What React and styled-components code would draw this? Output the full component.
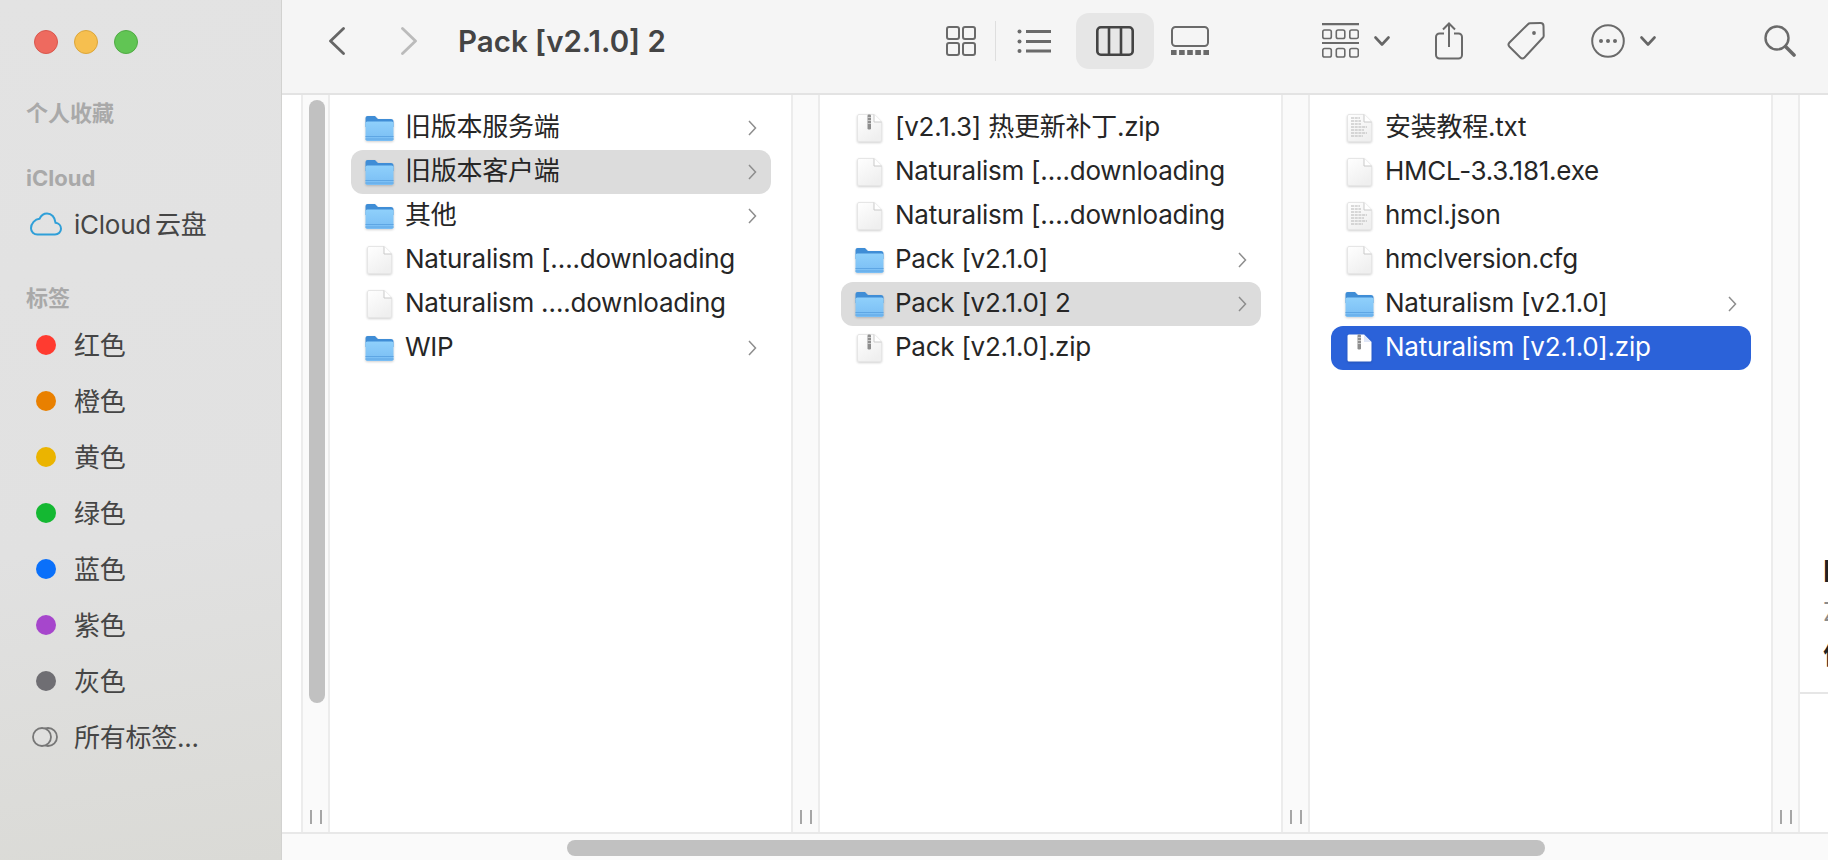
import React from 'react'
import styled, { createGlobalStyle } from 'styled-components'

const GlobalStyle = createGlobalStyle`
  html, body {
    margin: 0;
    height: 100%;
    overflow: hidden;
    background: #fff;
  }
  body {
    font-family: Inter, "Noto Sans CJK SC", sans-serif;
  }
  * {
    box-sizing: border-box;
  }
`

const Window = styled.div`
  display: flex;
  width: 1828px;
  height: 860px;
  overflow: hidden;
`

/* sidebar */
const Sidebar = styled.aside`
  flex: 0 0 282px;
  display: flex;
  flex-direction: column;
  padding-top: 30px;
  background: linear-gradient(172deg, #e3e3e3 0%, #e1e1e1 62%, #dadad6 100%);
  border-right: 1px solid #d2d2d0;
`

const Lights = styled.div`
  display: flex;
  gap: 16px;
  padding-left: 34px;
  margin-bottom: 40px;
`

const Light = styled.span`
  width: 24px;
  height: 24px;
  border-radius: 50%;
  background: ${p => p.$color};
  border: 1px solid ${p => p.$edge};
`

const Section = styled.section`
  margin-top: ${p => p.$top || 0}px;
`

const SectionTitle = styled.div`
  display: flex;
  align-items: center;
  height: 38px;
  padding-left: 26px;
  padding-bottom: ${p => (p.$cjk ? 4 : 0)}px;
  padding-top: ${p => (p.$cjk ? 0 : 1)}px;
  font-size: 22px;
  font-weight: 700;
  color: #a9a9a9;
`

const SideRow = styled.div`
  display: flex;
  align-items: center;
  height: 56px;
  padding-left: 30px;
  font-size: 26px;
  letter-spacing: -0.25px;
  word-spacing: -3px;
  color: #454545;
`

const SideIcon = styled.span`
  flex: 0 0 44px;
  display: flex;
  align-items: center;
`

const SideLabel = styled.span`
  padding-bottom: 4px;
`

const TagDot = styled.span`
  width: 20px;
  height: 20px;
  margin-left: 6px;
  border-radius: 50%;
  background: ${p => p.$color};
`

/* toolbar */
const Main = styled.main`
  flex: 1;
  min-width: 0;
  display: flex;
  flex-direction: column;
`

const Toolbar = styled.header`
  flex: 0 0 95px;
  display: flex;
  align-items: center;
  padding: 0 32px 12px 47px;
  background: #f5f5f5;
  border-bottom: 2px solid #e3e3e3;
`

const Title = styled.h1`
  margin: 0 0 0 41px;
  font-size: 29.5px;
  font-weight: 600;
  color: #444;
  white-space: nowrap;
`

const ToolSlot = styled.div`
  display: flex;
  align-items: center;
  margin-left: ${p => p.$ml || 0}px;
  svg {
    display: block;
  }
`

const Spacer = styled.div`
  flex: 1;
`

const ViewDivider = styled.span`
  width: 1px;
  height: 40px;
  margin-left: 19px;
  background: #dedede;
`

const ActiveView = styled.div`
  display: flex;
  align-items: center;
  justify-content: center;
  width: 78px;
  height: 56px;
  margin-left: 25px;
  border-radius: 13px;
  background: #e6e6e6;
`

/* browser columns */
const Browser = styled.div`
  flex: 1;
  min-height: 0;
  display: flex;
  background: #fff;
`

const ClippedColumn = styled.div`
  flex: 0 0 19px;
`

const Resizer = styled.div`
  position: relative;
  flex: 0 0 29px;
  display: flex;
  justify-content: center;
  align-items: flex-end;
  gap: 8px;
  padding-bottom: 8px;
  background: #fafafa;
  border-left: 2px solid #ececec;
  border-right: 2px solid #ececec;
`

const Grip = styled.span`
  width: 2px;
  height: 14px;
  background: #a6a6a6;
`

const ScrollThumb = styled.div`
  position: absolute;
  top: 5px;
  left: 6px;
  width: 16px;
  height: 603px;
  border-radius: 8px;
  background: #c1c1c1;
`

const Column = styled.div`
  flex: 0 0 461px;
  padding: 11px 20px 0 21px;
`

const Row = styled.div`
  display: flex;
  align-items: center;
  height: 44px;
  padding: 0 14px;
  border-radius: 12px;
  font-size: 26px;
  letter-spacing: -0.25px;
  white-space: nowrap;
  color: ${p => (p.$state === 'active' ? '#fff' : '#262626')};
  background: ${p =>
    p.$state === 'active' ? '#2b62d9' : p.$state === 'path' ? '#dcdcdc' : 'transparent'};
`

const RowIcon = styled.span`
  flex: 0 0 40px;
  display: flex;
  svg {
    display: block;
    filter: drop-shadow(0 1px 1px rgba(0, 0, 0, 0.18));
  }
`

const RowName = styled.span`
  flex: 1;
  min-width: 0;
  padding-bottom: ${p => (p.$cjk ? 7 : 3)}px;
`

const Preview = styled.div`
  flex: 1;
  min-width: 0;
  overflow: hidden;
  padding: 455px 0 0 23px;
  white-space: nowrap;
`

const PreviewName = styled.div`
  height: 42px;
  line-height: 42px;
  font-size: 30px;
  font-weight: 700;
  color: #222;
`

const PreviewKind = styled.div`
  height: 40px;
  line-height: 40px;
  font-size: 25px;
  color: #8a8a8a;
`

const PreviewHeading = styled.div`
  height: 46px;
  line-height: 46px;
  font-size: 26px;
  font-weight: 700;
  color: #222;
`

const PreviewRule = styled.div`
  height: 2px;
  margin: 14px 0 0 -23px;
  background: #e6e6e6;
`

const BottomBar = styled.div`
  flex: 0 0 28px;
  padding: 6px 0 0 285px;
  background: #fafafa;
  border-top: 2px solid #e8e8e8;
`

const BottomThumb = styled.div`
  width: 978px;
  height: 16px;
  border-radius: 8px;
  background: #c1c1c1;
`

/* drawings */
const FolderIcon = () => (
  <svg width="29" height="27" viewBox="0 0 29 27">
    <defs>
      <linearGradient id="folderBody" x1="0" y1="0" x2="0" y2="1">
        <stop offset="0" stopColor="#8fd0fb" />
        <stop offset="1" stopColor="#79bdf4" />
      </linearGradient>
    </defs>
    <path d="M0.5 3a2 2 0 0 1 2-2h7.5l3 3h13a2.500 2.500 0 0 1 2.500 2.500V12H0.500z" fill="#3f8dd6" />
    <rect x="0.5" y="6.500" width="28" height="19.500" rx="1.800" fill="url(#folderBody)" />
    <path d="M0.500 21.500h28M0.500 24h28" stroke="#5ea6e4" strokeWidth="1" />
  </svg>
)

const DocIcon = ({ kind, active }) => (
  <svg width="25" height="28" viewBox="0 0 25 28" style={{ marginLeft: 2 }}>
    <defs>
      <linearGradient id="docBody" x1="0" y1="0" x2="0.6" y2="1">
        <stop offset="0" stopColor="#ffffff" />
        <stop offset="1" stopColor="#efefef" />
      </linearGradient>
    </defs>
    <path
      d="M2 0.500H17L24.500 8V26a1.500 1.500 0 0 1-1.500 1.500H2A1.500 1.500 0 0 1 0.500 26V2A1.500 1.500 0 0 1 2 0.500z"
      fill={active ? '#fff' : 'url(#docBody)'}
      stroke={active ? 'none' : '#e6e6e6'}
    />
    <path d="M17 0.500V8H24.500" fill={active ? '#dfe6f7' : '#fff'} stroke={active ? 'none' : '#c9c9c9'} />
    {kind === 'zip' && (
      <g>
        <rect x="10.500" y="0.500" width="3.500" height="15" rx="1.200" fill="#8d8d8d" />
        <path d="M10.500 3.500h3.500M10.500 6.500h3.500M10.500 9.500h3.500" stroke="#d5d5d5" strokeWidth="0.800" />
      </g>
    )}
    {kind === 'text' && (
      <path
        d="M4 4h9M4 7h10M4 10h10M4 13h16M4 16h13M4 19h16M4 22h12"
        stroke="#b5b5b5"
        strokeWidth="1.200"
        strokeDasharray="3 0.700"
      />
    )}
  </svg>
)

const RowChevron = ({ color = '#8d8d8d' }) => (
  <svg width="9" height="16" viewBox="0 0 9 16" fill="none" stroke={color} strokeWidth="1.500">
    <path d="M1 1l6.500 7L1 15" />
  </svg>
)

const NavChevron = ({ back, color }) => (
  <svg width="16" height="28" viewBox="0 0 16 28" fill="none" stroke={color} strokeWidth="2.800" strokeLinecap="round" strokeLinejoin="round">
    <path d={back ? 'M14.500 1.500L1.500 14l13 12.500' : 'M1.500 1.500L14.500 14l-13 12.500'} />
  </svg>
)

const MiniChevron = () => (
  <svg width="16" height="10" viewBox="0 0 16 10" fill="none" stroke="#666" strokeWidth="2.600" strokeLinecap="round" strokeLinejoin="round">
    <path d="M1.500 1.500L8 8.500l6.500-7" />
  </svg>
)

const GridIcon = () => (
  <svg width="30" height="30" viewBox="0 0 30 30" fill="none" stroke="#6a6a6a" strokeWidth="2">
    <rect x="1" y="1" width="12" height="12" rx="2" />
    <rect x="17" y="1" width="12" height="12" rx="2" />
    <rect x="1" y="17" width="12" height="12" rx="2" />
    <rect x="17" y="17" width="12" height="12" rx="2" />
  </svg>
)

const ListIcon = () => (
  <svg width="34" height="24" viewBox="0 0 34 24" fill="none" stroke="#6a6a6a">
    <path d="M9 2.500h25M9 12.500h25M9 22h25" strokeWidth="2.800" />
    <circle cx="2.500" cy="2.500" r="2" fill="#6a6a6a" stroke="none" />
    <circle cx="2.500" cy="12.500" r="2" fill="#6a6a6a" stroke="none" />
    <circle cx="2.500" cy="22" r="2" fill="#6a6a6a" stroke="none" />
  </svg>
)

const ColumnsIcon = () => (
  <svg width="38" height="30" viewBox="0 0 38 30" fill="none" stroke="#444" strokeWidth="2.600">
    <rect x="1.300" y="1.300" width="35.400" height="27.400" rx="3.500" />
    <path d="M13 1.300v27.400M25 1.300v27.400" />
  </svg>
)

const GalleryIcon = () => (
  <svg width="38" height="29" viewBox="0 0 38 29" fill="none">
    <rect x="1" y="1" width="36" height="19" rx="3.500" stroke="#6a6a6a" strokeWidth="2" />
    <path d="M0 26.500h38" stroke="#6a6a6a" strokeWidth="5" strokeDasharray="5.600 2.500" />
  </svg>
)

const GroupIcon = () => {
  const cells = [0, 13.500, 27]
  return (
    <svg width="37" height="35" viewBox="0 0 37 35" fill="none" stroke="#6a6a6a">
      <path d="M0 1.200h37M0 20h37" strokeWidth="2.200" />
      {cells.map(x => (
        <React.Fragment key={x}>
          <rect x={x + 0.800} y="7" width="8.500" height="8.500" rx="1.800" strokeWidth="1.600" />
          <rect x={x + 0.800} y="25.500" width="8.500" height="8.500" rx="1.800" strokeWidth="1.600" />
        </React.Fragment>
      ))}
    </svg>
  )
}

const ShareIcon = () => (
  <svg width="28" height="38" viewBox="0 0 28 38" fill="none" stroke="#6a6a6a" strokeWidth="2">
    <path d="M9 11.500H4.500a3.500 3.500 0 0 0-3.500 3.500V33a3.500 3.500 0 0 0 3.500 3.500h19A3.500 3.500 0 0 0 27 33V15a3.500 3.500 0 0 0-3.500-3.500H19" />
    <path d="M14 25V2M8 7.500L14 1.500l6 6" />
  </svg>
)

const TagIcon = () => (
  <svg width="38" height="38" viewBox="0 0 38 38" fill="none" stroke="#6a6a6a" strokeWidth="2">
    <path d="M21 2.200a3 3 0 0 1 2-0.900l10.500-0.200a3 3 0 0 1 3 3l0.200 9.500a3 3 0 0 1-0.900 2.200L17.500 35.500a3 3 0 0 1-4.200 0L2.500 24.700a3 3 0 0 1 0-4.200z" />
    <circle cx="27" cy="11" r="1.900" fill="#6a6a6a" stroke="none" />
  </svg>
)

const MoreIcon = () => (
  <svg width="34" height="34" viewBox="0 0 34 34" fill="none">
    <circle cx="17" cy="17" r="15.800" stroke="#6a6a6a" strokeWidth="2" />
    <circle cx="10" cy="17" r="2" fill="#6a6a6a" />
    <circle cx="17" cy="17" r="2" fill="#6a6a6a" />
    <circle cx="24" cy="17" r="2" fill="#6a6a6a" />
  </svg>
)

const SearchIcon = () => (
  <svg width="32" height="32" viewBox="0 0 32 32" fill="none" stroke="#6a6a6a">
    <circle cx="13" cy="13" r="11.500" strokeWidth="2.400" />
    <path d="M21.500 21.500L30 30" strokeWidth="3.600" strokeLinecap="round" />
  </svg>
)

const CloudIcon = () => (
  <svg width="32" height="24" viewBox="0 0 32 24" fill="none" stroke="#2f9fd8" strokeWidth="2">
    <path d="M7.500 22.500H25c3.500 0 6-2.600 6-5.800 0-3.300-2.400-5.700-5.500-6C25 5.200 21.500 1.500 17 1.500c-3.500 0-6 2-7.500 5.300C5 7.300 1 11.500 1 16.300c0 3.500 2.800 6.200 6.500 6.200z" />
  </svg>
)

const AllTagsIcon = () => (
  <svg width="26" height="20" viewBox="0 0 26 20" fill="none" stroke="#777" strokeWidth="1.800" style={{ marginLeft: 2 }}>
    <circle cx="16" cy="10" r="9" />
    <circle cx="10" cy="10" r="9" fill="#e0e0df" />
  </svg>
)

const tags = [
  ['红色', '#ff3b30'],
  ['橙色', '#e98000'],
  ['黄色', '#ebb400'],
  ['绿色', '#14b832'],
  ['蓝色', '#0a70fa'],
  ['紫色', '#a646cc'],
  ['灰色', '#6f6e73'],
]

const columns = [
  [
    { name: '旧版本服务端', type: 'folder' },
    { name: '旧版本客户端', type: 'folder', state: 'path' },
    { name: '其他', type: 'folder' },
    { name: 'Naturalism [….downloading', type: 'file' },
    { name: 'Naturalism ….downloading', type: 'file' },
    { name: 'WIP', type: 'folder' },
  ],
  [
    { name: '[v2.1.3] 热更新补丁.zip', type: 'zip' },
    { name: 'Naturalism [….downloading', type: 'file' },
    { name: 'Naturalism [….downloading', type: 'file' },
    { name: 'Pack [v2.1.0]', type: 'folder' },
    { name: 'Pack [v2.1.0] 2', type: 'folder', state: 'path' },
    { name: 'Pack [v2.1.0].zip', type: 'zip' },
  ],
  [
    { name: '安装教程.txt', type: 'text' },
    { name: 'HMCL-3.3.181.exe', type: 'file' },
    { name: 'hmcl.json', type: 'text' },
    { name: 'hmclversion.cfg', type: 'file' },
    { name: 'Naturalism [v2.1.0]', type: 'folder' },
    { name: 'Naturalism [v2.1.0].zip', type: 'zip', state: 'active' },
  ],
]

const FileRow = ({ item }) => (
  <Row $state={item.state}>
    <RowIcon>
      {item.type === 'folder' ? (
        <FolderIcon />
      ) : (
        <DocIcon kind={item.type} active={item.state === 'active'} />
      )}
    </RowIcon>
    <RowName $cjk={/[\u4e00-\u9fff]/.test(item.name)}>{item.name}</RowName>
    {item.type === 'folder' && <RowChevron />}
  </Row>
)

const ColumnResizer = ({ thumb }) => (
  <Resizer>
    {thumb && <ScrollThumb />}
    <Grip />
    <Grip />
  </Resizer>
)

export default function App() {
  return (
    <Window>
      <GlobalStyle />
      <Sidebar>
        <Lights>
          <Light $color="#ee6a5f" $edge="#d9574d" />
          <Light $color="#f6bf4f" $edge="#dca63a" />
          <Light $color="#61c554" $edge="#50ab44" />
        </Lights>
        <Section>
          <SectionTitle $cjk>个人收藏</SectionTitle>
        </Section>
        <Section $top={26}>
          <SectionTitle>iCloud</SectionTitle>
          <SideRow>
            <SideIcon>
              <CloudIcon />
            </SideIcon>
            <SideLabel>iCloud 云盘</SideLabel>
          </SideRow>
        </Section>
        <Section $top={27}>
          <SectionTitle $cjk>标签</SectionTitle>
          {tags.map(([label, color]) => (
            <SideRow key={label}>
              <SideIcon>
                <TagDot $color={color} />
              </SideIcon>
              <SideLabel>{label}</SideLabel>
            </SideRow>
          ))}
          <SideRow>
            <SideIcon>
              <AllTagsIcon />
            </SideIcon>
            <SideLabel>所有标签...</SideLabel>
          </SideRow>
        </Section>
      </Sidebar>

      <Main>
        <Toolbar>
          <ToolSlot>
            <NavChevron back color="#666" />
          </ToolSlot>
          <ToolSlot $ml={56}>
            <NavChevron color="#bbb" />
          </ToolSlot>
          <Title>Pack [v2.1.0] 2</Title>
          <Spacer />
          <ToolSlot>
            <GridIcon />
          </ToolSlot>
          <ViewDivider />
          <ToolSlot $ml={21}>
            <ListIcon />
          </ToolSlot>
          <ActiveView>
            <ColumnsIcon />
          </ActiveView>
          <ToolSlot $ml={17}>
            <GalleryIcon />
          </ToolSlot>
          <ToolSlot $ml={113}>
            <GroupIcon />
          </ToolSlot>
          <ToolSlot $ml={15}>
            <MiniChevron />
          </ToolSlot>
          <ToolSlot $ml={45}>
            <ShareIcon />
          </ToolSlot>
          <ToolSlot $ml={44}>
            <TagIcon />
          </ToolSlot>
          <ToolSlot $ml={46}>
            <MoreIcon />
          </ToolSlot>
          <ToolSlot $ml={15}>
            <MiniChevron />
          </ToolSlot>
          <ToolSlot $ml={108}>
            <SearchIcon />
          </ToolSlot>
        </Toolbar>

        <Browser>
          <ClippedColumn />
          <ColumnResizer thumb />
          {columns.map((items, index) => (
            <React.Fragment key={index}>
              <Column>
                {items.map((item, i) => (
                  <FileRow key={i} item={item} />
                ))}
              </Column>
              <ColumnResizer />
            </React.Fragment>
          ))}
          <Preview>
            <PreviewName>Naturalism [v2.1.0].zip</PreviewName>
            <PreviewKind>ZIP 归档 - 1.1 GB</PreviewKind>
            <PreviewHeading>信息</PreviewHeading>
            <PreviewRule />
          </Preview>
        </Browser>

        <BottomBar>
          <BottomThumb />
        </BottomBar>
      </Main>
    </Window>
  )
}
